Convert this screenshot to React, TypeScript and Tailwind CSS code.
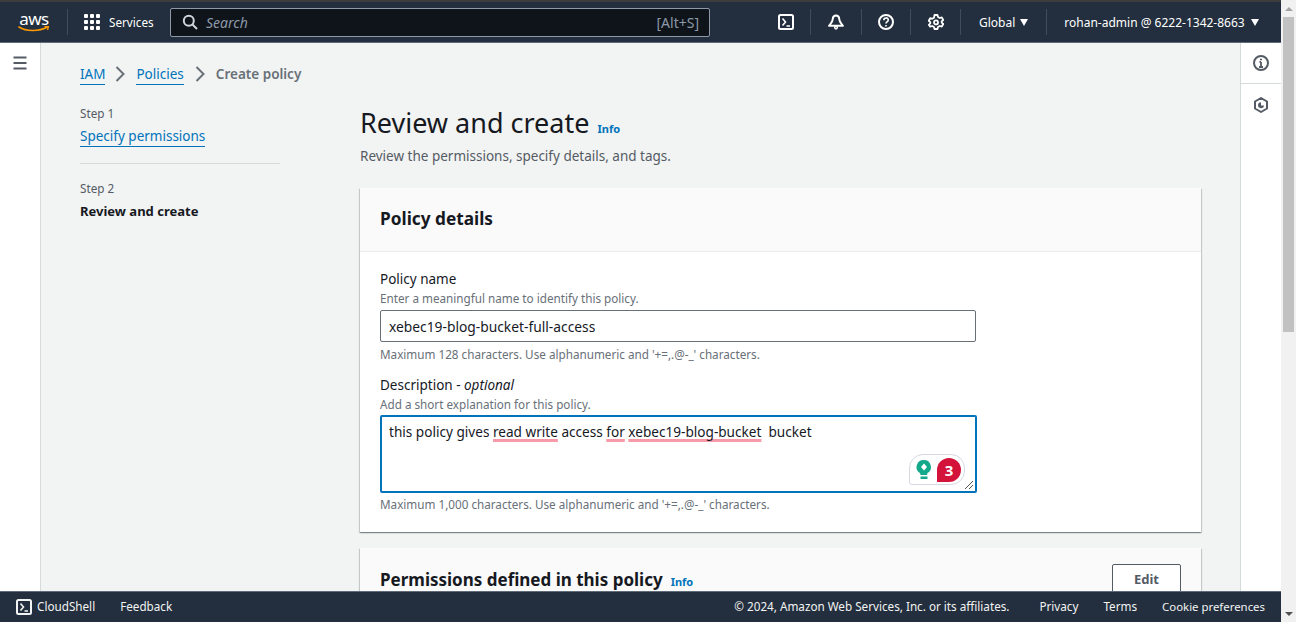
import React from "react";

const font = { fontFamily: '"Noto Sans", sans-serif' };

function ShellIcon({ size = 16 }: { size?: number }) {
  return (
    <svg width={size} height={size} viewBox="0 0 16 16" fill="none" stroke="currentColor" strokeWidth="2">
      <rect x="1" y="1" width="14" height="14" rx="1.5" />
      <path d="M4.5 4.5 7.5 8l-3 3.5M8.5 12h3.5" strokeWidth="1.6" />
    </svg>
  );
}

function Sep() {
  return <div className="w-px h-[26px] bg-[#414d5c]" />;
}

function Caret() {
  return <span className="block w-0 h-0 border-x-[4.500px] border-x-transparent border-t-[7px] border-t-white" />;
}

function Header() {
  return (
    <header className="h-[43px] shrink-0 bg-[#232f3e] border-t-2 border-t-[#3d3d3d] border-b border-b-[#5f6b7a] flex items-center text-white">
      <div className="w-[67px] shrink-0 flex flex-col items-center pl-[1px]">
        <span className="text-[17px] leading-[15px] tracking-[-0.5px] h-[15px]">aws</span>
        <svg width="32" height="7" viewBox="0 0 32 7">
          <path d="M1 1c7 4.600 20 4.600 28 .3" fill="none" stroke="#f90" strokeWidth="1.600" strokeLinecap="round" />
          <path d="M26.500 .5 30.500 .3 29.500 4" fill="none" stroke="#f90" strokeWidth="1.300" />
        </svg>
      </div>
      <Sep />
      <div className="w-4 h-4 ml-[16px] grid grid-cols-3 gap-[2px] shrink-0">
        {[0, 1, 2, 3, 4, 5, 6, 7, 8].map((i) => (
          <span key={i} className="bg-white rounded-[1px]" />
        ))}
      </div>
      <span className="ml-[9px] text-[11.700px] w-[45px] whitespace-nowrap pt-[1px]">Services</span>
      <div className="ml-[16px] w-[540px] h-[29px] shrink-0 bg-[#0f141a] border border-[#8d99a8] rounded-[2px] flex items-center pl-[11px] pr-[10px] text-[#8d99a8] text-[14px]">
        <svg width="16" height="16" viewBox="0 0 16 16" fill="none" stroke="#d1d5db" strokeWidth="2">
          <circle cx="6.800" cy="6.800" r="5" />
          <path d="m10.500 10.500 4.500 4.500" />
        </svg>
        <span className="ml-[8px] italic flex-1">Search</span>
        <span>[Alt+S]</span>
      </div>
      <div className="ml-[68px]"><ShellIcon /></div>
      <div className="ml-[16px]"><Sep /></div>
      <div className="ml-[17px]">
        <svg width="16" height="16" viewBox="0 0 16 16" fill="none" stroke="currentColor" strokeWidth="1.900">
          <path d="M8 1.500c-2.200 0-3.200 1.700-3.300 3.600C4.600 7.500 3 9.400 1 11.800h14c-2-2.400-3.600-4.300-3.700-6.700C11.200 3.200 10.200 1.500 8 1.500Z" strokeLinejoin="round" />
          <circle cx="8" cy="13.600" r="1.300" strokeWidth="1.500" />
        </svg>
      </div>
      <div className="ml-[17px]"><Sep /></div>
      <div className="ml-[16px]">
        <svg width="16" height="16" viewBox="0 0 16 16" fill="none" stroke="currentColor" strokeWidth="2">
          <circle cx="8" cy="8" r="7" />
          <path d="M5.800 6.200c0-3 4.500-3 4.500-.2 0 1.600-2.300 1.700-2.300 3.500" strokeWidth="1.600" />
          <path d="M8 11v1.500" strokeWidth="1.600" />
        </svg>
      </div>
      <div className="ml-[16px]"><Sep /></div>
      <div className="ml-[17px]">
        <svg width="16" height="16" viewBox="0 0 16 16" fill="none" stroke="currentColor" strokeWidth="1.800">
          <path d="M6.500 1h3l.5 2 1.800 1 2-.6 1.400 2.600-1.500 1.400v1.200l1.500 1.400-1.400 2.600-2-.6-1.800 1-.5 2h-3l-.5-2-1.800-1-2 .6L.8 10.800l1.500-1.400V8.200L.8 6.800 2.200 4.200l2 .6 1.800-1Z" strokeLinejoin="round" />
          <circle cx="8" cy="8.400" r="2" />
        </svg>
      </div>
      <div className="ml-[16px]"><Sep /></div>
      <span className="ml-[18px] text-[12px] pt-[1px]">Global</span>
      <div className="ml-[5px]"><Caret /></div>
      <div className="ml-[18px]"><Sep /></div>
      <span className="ml-[17px] text-[12px] whitespace-nowrap pt-[1px]">rohan-admin @ 6222-1342-8663</span>
      <div className="ml-[6px]"><Caret /></div>
    </header>
  );
}

function Footer() {
  return (
    <footer className="h-[31px] shrink-0 bg-[#232f3e] border-t border-t-[#5f6b7a] flex items-center text-[11.700px] text-[#f2f3f3] pl-[16px] pr-[16px] relative z-10">
      <ShellIcon />
      <span className="ml-[5px]">CloudShell</span>
      <span className="ml-[25px]">Feedback</span>
      <span className="ml-auto">© 2024, Amazon Web Services, Inc. or its affiliates.</span>
      <span className="ml-[30px]">Privacy</span>
      <span className="ml-[25px]">Terms</span>
      <span className="ml-[25px] text-[11.400px]">Cookie preferences</span>
    </footer>
  );
}

function Chevron() {
  return (
    <svg width="16" height="16" viewBox="0 0 16 16" fill="none" stroke="#687078" strokeWidth="2" className="mx-[8px]">
      <path d="m4.500 1 7 7-7 7" />
    </svg>
  );
}

function Link({ children }: { children: React.ReactNode }) {
  return <span className="text-[#0073bb] border-b border-[#0073bb] leading-[16px] pb-[1px]">{children}</span>;
}

function Squiggle({ children }: { children: React.ReactNode }) {
  return (
    <span className="underline decoration-[#f79aa9] decoration-[3px] underline-offset-[2px] [text-decoration-skip-ink:none]">
      {children}
    </span>
  );
}

function Hint({ children }: { children: React.ReactNode }) {
  return <p className="text-[11.700px] leading-[16px] text-[#687078]">{children}</p>;
}

function Label({ children }: { children: React.ReactNode }) {
  return <p className="text-[13.500px] leading-[18px] text-[#16191f]">{children}</p>;
}

function PolicyDetails() {
  return (
    <section className="bg-white shadow-[0_1px_1px_0_rgba(0,28,36,0.3),1px_1px_1px_0_rgba(0,28,36,0.15),-1px_1px_1px_0_rgba(0,28,36,0.15)] mb-[16px]">
      <div className="h-[64px] bg-[#fafafa] border-b border-[#eaeded] flex items-center px-[20px] pb-[2px]">
        <h2 className="text-[17.250px] font-bold text-[#16191f]">Policy details</h2>
      </div>
      <div className="px-[20px] pt-[18px] pb-[20px]">
        <Label>Policy name</Label>
        <div className="mt-[2px]"><Hint>Enter a meaningful name to identify this policy.</Hint></div>
        <div className="mt-[4px] w-[596px] h-[32px] border border-[#687078] rounded-[2px] px-[8px] pt-[2px] flex items-center text-[13.800px] text-[#16191f]">
          xebec19-blog-bucket-full-access
        </div>
        <div className="mt-[4px]"><Hint>Maximum 128 characters. Use alphanumeric and '+=,.@-_' characters.</Hint></div>
        <div className="mt-[14px]">
          <Label>Description - <i>optional</i></Label>
        </div>
        <div className="mt-[2px]"><Hint>Add a short explanation for this policy.</Hint></div>
        <div className="mt-[3px] w-[597px] h-[78px] border-2 border-[#0073bb] rounded-[2px] px-[7px] pt-[5px] text-[13.600px] leading-[20px] text-[#16191f] relative whitespace-pre">
          this policy gives <Squiggle>read write</Squiggle> access <Squiggle>for</Squiggle> <Squiggle>xebec19-blog-bucket</Squiggle>  bucket
          <div className="absolute right-[10px] bottom-[6px] w-[56px] h-[31px] border border-[#d6d9e2] rounded-[14px] rounded-bl-[3px] bg-white flex items-center pl-[6px] pr-[3px] justify-between">
            <svg width="16" height="22" viewBox="0 0 16 22">
              <path d="M8 1a7 7 0 0 1 3.500 13l-.5 2H4.500L4 14A7 7 0 0 1 8 1Z" fill="#15a98c" />
              <path d="M8 4.500 11 8 8 11.500 5 8Z" fill="#fff" />
              <path d="M4.500 17.500h7V20h-7z" fill="#15a98c" />
            </svg>
            <span className="w-[24px] h-[24px] bg-[#d3133a] rounded-full rounded-bl-[3px] text-white text-[15px] font-bold flex items-center justify-center">3</span>
          </div>
          <svg width="10" height="10" viewBox="0 0 10 10" className="absolute right-[1px] bottom-[1px]" stroke="#555" strokeWidth="1">
            <path d="M1 9 9 1M5 9 9 5" />
          </svg>
        </div>
        <div className="mt-[3px]"><Hint>Maximum 1,000 characters. Use alphanumeric and '+=,.@-_' characters.</Hint></div>
      </div>
    </section>
  );
}

function PermissionsCard() {
  return (
    <section className="bg-[#fafafa] shadow-[0_1px_1px_0_rgba(0,28,36,0.3),1px_1px_1px_0_rgba(0,28,36,0.15),-1px_1px_1px_0_rgba(0,28,36,0.15)] h-[64px] px-[20px] flex items-start justify-between pt-[16px]">
      <div className="flex items-baseline">
        <h2 className="text-[17px] font-bold text-[#16191f] leading-[32px]">Permissions defined in this policy</h2>
        <span className="ml-[8px] text-[11px] font-bold text-[#0073bb]">Info</span>
      </div>
      <button className="w-[69px] h-[32px] border border-[#545b64] rounded-[2px] bg-white text-[13px] font-bold text-[#545b64]">Edit</button>
    </section>
  );
}

export default function App() {
  return (
    <div className="h-screen w-full flex overflow-hidden bg-white" style={font}>
      <div className="flex-1 min-w-0 flex flex-col">
        <Header />
        <div className="flex-1 min-h-0 flex overflow-hidden">
          <nav className="w-[41px] shrink-0 bg-white border-r border-[#d5dbdb] flex justify-center pt-[12px]">
            <svg width="16" height="16" viewBox="0 0 16 16" stroke="#545b64" strokeWidth="2">
              <path d="M1.500 2.500h13M1.500 8h13M1.500 13.500h13" />
            </svg>
          </nav>
          <main className="flex-1 min-w-0 bg-[#f2f3f3] pl-[39px] pr-[39px] pt-[20px]">
            <div className="flex items-center h-[22px] text-[13.500px]">
              <div className="mt-[1px]"><Link>IAM</Link></div>
              <div className="-ml-[1px]"><Chevron /></div>
              <div className="mt-[1px]"><Link>Policies</Link></div>
              <Chevron />
              <span className="font-semibold text-[#687078]">Create policy</span>
            </div>
            <div className="flex mt-[19px]">
              <aside className="w-[200px] shrink-0">
                <p className="text-[11.700px] leading-[16px] text-[#545b64] mt-[1px]">Step 1</p>
                <p className="mt-[5px] text-[13.500px] leading-[20px]"><Link>Specify permissions</Link></p>
                <div className="h-px bg-[#d5dbdb] mt-[17px]" />
                <p className="text-[11.700px] leading-[16px] text-[#545b64] mt-[16px]">Step 2</p>
                <p className="mt-[5px] text-[13px] leading-[20px] font-bold text-[#16191f]">Review and create</p>
              </aside>
              <div className="ml-[80px] flex-1 min-w-0">
                <div className="flex items-baseline pt-[1px]">
                  <h1 className="text-[27px] leading-[36px] text-[#16191f]">Review and create</h1>
                  <span className="ml-[8px] text-[11px] font-bold text-[#0073bb]">Info</span>
                </div>
                <p className="mt-[5px] text-[13.500px] leading-[20px] text-[#545b64]">Review the permissions, specify details, and tags.</p>
                <div className="mt-[22px]">
                  <PolicyDetails />
                  <PermissionsCard />
                </div>
              </div>
            </div>
          </main>
          <aside className="w-[41px] shrink-0 bg-white border-l border-[#d5dbdb] flex flex-col">
            <div className="h-[41px] border-b border-[#d5dbdb] flex items-center justify-center">
              <svg width="16" height="16" viewBox="0 0 16 16" fill="none" stroke="#545b64" strokeWidth="2">
                <circle cx="8" cy="8" r="7" />
                <path d="M8 7v5M6 12h4M6.500 7H8" strokeWidth="1.800" />
                <path d="M8 3.800v1.500" strokeWidth="2" />
              </svg>
            </div>
            <div className="h-[41px] flex items-center justify-center">
              <svg width="16" height="16" viewBox="0 0 16 16" fill="none" stroke="#545b64" strokeWidth="2">
                <path d="M8 1 14 4.500v7L8 15l-6-3.500v-7Z" strokeLinejoin="round" />
                <path d="M11 8.500A3 3 0 1 1 8 5.200v3.300Z" fill="#545b64" stroke="none" />
              </svg>
            </div>
          </aside>
        </div>
        <Footer />
      </div>
      <div className="w-[15px] shrink-0 bg-[#f1f1f1] flex flex-col items-center">
        <div className="h-[17px] flex items-center justify-center">
          <span className="block w-0 h-0 border-x-[4px] border-x-transparent border-b-[4px] border-b-[#a3a3a3]" />
        </div>
        <div className="w-[11px] mx-[2px] h-[315px] bg-[#c1c1c1]" />
        <div className="mt-auto h-[17px] flex items-center justify-center">
          <span className="block w-0 h-0 border-x-[4px] border-x-transparent border-t-[4px] border-t-[#505050]" />
        </div>
      </div>
    </div>
  );
}
